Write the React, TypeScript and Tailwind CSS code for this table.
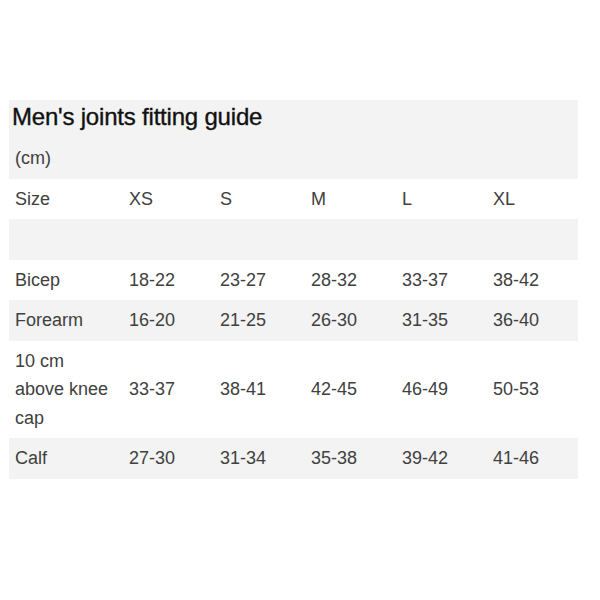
const sizes = ["XS", "S", "M", "L", "XL"];

const rows: { label: string[]; values: string[]; shaded: boolean }[] = [
  { label: [""], values: ["", "", "", "", ""], shaded: true },
  { label: ["Bicep"], values: ["18-22", "23-27", "28-32", "33-37", "38-42"], shaded: false },
  { label: ["Forearm"], values: ["16-20", "21-25", "26-30", "31-35", "36-40"], shaded: true },
  { label: ["10 cm", "above knee", "cap"], values: ["33-37", "38-41", "42-45", "46-49", "50-53"], shaded: false },
  { label: ["Calf"], values: ["27-30", "31-34", "35-38", "39-42", "41-46"], shaded: true },
];

const Row = ({ label, values, shaded }: { label: string[]; values: string[]; shaded: boolean }) => (
  <div className={`grid grid-cols-[114px_repeat(5,91px)] items-center py-[6px] ${shaded ? "bg-[#f2f3f2]" : "bg-white"}`}>
    <div className="pl-[6px]">
      {label.map((l, i) => (
        <div key={i} className="h-[28.5px]">{l}</div>
      ))}
    </div>
    {values.map((v, i) => (
      <div key={i} className="pl-[6px]">{v}</div>
    ))}
  </div>
);

export default function App() {
  return (
    <div className="w-[600px] h-[600px] bg-white pt-[100px] pl-[9px]" style={{ fontFamily: '"Liberation Sans", Arial, sans-serif' }}>
      <div className="w-[569px] text-[18px] leading-[28.5px] text-[#404040]">
        <div className="bg-[#f2f3f2]">
          <div className="pl-[3px] pb-[4px] text-[24px] leading-[34px] text-[#111] tracking-[-0.2px] [-webkit-text-stroke:0.35px_#111]">Men's joints fitting guide</div>
          <div className="pl-[6px] py-[6px]">(cm)</div>
        </div>
        <div className="grid grid-cols-[114px_repeat(5,91px)] items-center py-[6px] bg-white">
          <div className="pl-[6px]">Size</div>
          {sizes.map((s) => (
            <div key={s} className="pl-[6px]">{s}</div>
          ))}
        </div>
        {rows.map((r, i) => (
          <Row key={i} {...r} />
        ))}
      </div>
    </div>
  );
}
